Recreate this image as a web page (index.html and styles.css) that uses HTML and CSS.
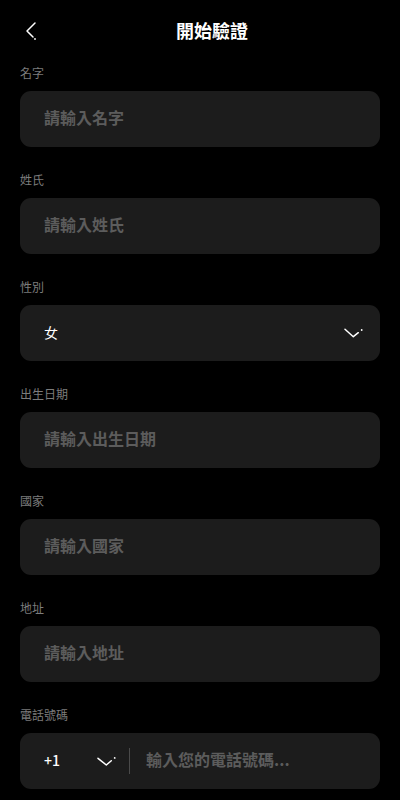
FILE: index.html
```html
<!DOCTYPE html>
<html lang="zh-Hant">
<head>
<meta charset="utf-8">
<meta name="viewport" content="width=device-width, initial-scale=1">
<title>開始驗證</title>
<link rel="stylesheet" href="styles.css">
</head>
<body>
<div class="page">
  <header class="header">
    <button class="back" aria-label="返回">
      <svg width="24" height="24" viewBox="0 0 24 24" fill="none">
        <path d="M15 5 L7 13 L13 19" stroke="#fff" stroke-width="1.5" stroke-linecap="round" stroke-linejoin="round"/>
        <circle cx="15" cy="21" r="0.9" fill="#fff"/>
      </svg>
    </button>
    <h1 class="title">開始驗證</h1>
  </header>

  <form class="form">
    <div class="group">
      <label class="label">名字</label>
      <input class="field" type="text" placeholder="請輸入名字">
    </div>
    <div class="group">
      <label class="label">姓氏</label>
      <input class="field" type="text" placeholder="請輸入姓氏">
    </div>
    <div class="group">
      <label class="label">性別</label>
      <div class="field select">
        <span class="value">女</span>
        <svg class="chev" width="20" height="12" viewBox="0 0 20 12" fill="none">
          <path d="M1 3.3 L9.3 10.7 L14.3 6.7" stroke="#fff" stroke-width="1.5" stroke-linecap="round" stroke-linejoin="round"/>
          <circle cx="17.7" cy="4" r="0.9" fill="#fff"/>
        </svg>
      </div>
    </div>
    <div class="group">
      <label class="label">出生日期</label>
      <input class="field" type="text" placeholder="請輸入出生日期">
    </div>
    <div class="group">
      <label class="label">國家</label>
      <input class="field" type="text" placeholder="請輸入國家">
    </div>
    <div class="group">
      <label class="label">地址</label>
      <input class="field" type="text" placeholder="請輸入地址">
    </div>
    <div class="group">
      <label class="label">電話號碼</label>
      <div class="field phone">
        <div class="code">
          <span class="code-text">+1</span>
          <svg class="chev" width="20" height="12" viewBox="0 0 20 12" fill="none">
            <path d="M1 3.3 L9.3 10 L14.3 5.7" stroke="#fff" stroke-width="1.5" stroke-linecap="round" stroke-linejoin="round"/>
            <circle cx="17.7" cy="2.9" r="0.9" fill="#fff"/>
          </svg>
        </div>
        <span class="divider"></span>
        <input class="phone-input" type="tel" placeholder="輸入您的電話號碼...">
      </div>
    </div>
  </form>
</div>
</body>
</html>
```
FILE: styles.css
```css
* {
  box-sizing: border-box;
}

html, body {
  margin: 0;
  padding: 0;
  background: #000;
}

body {
  font-family: "Noto Sans CJK TC", "Noto Sans", "Liberation Sans", sans-serif;
  color: #fff;
}

.page {
  width: 400px;
  min-height: 800px;
  background: #000;
}

.header {
  height: 60px;
  padding: 0 20px;
  display: flex;
  align-items: center;
}

.back {
  width: 24px;
  height: 24px;
  padding: 0;
  margin: 0;
  border: 0;
  background: transparent;
  display: flex;
}

.title {
  flex: 1;
  margin: 0;
  text-align: center;
  font-size: 18px;
  line-height: 24px;
  font-weight: 700;
  color: #fff;
}

.form {
  padding: 5px 20px 0;
  display: flex;
  flex-direction: column;
  gap: 25px;
}

.group {
  display: flex;
  flex-direction: column;
}

.label {
  font-size: 12px;
  line-height: 16px;
  color: #7c7c7c;
  margin-bottom: 10px;
}

.field {
  height: 56px;
  width: 100%;
  border: 0;
  outline: none;
  border-radius: 11px;
  background: #1c1c1c;
  padding: 0 24px 4px;
  font-family: inherit;
  font-size: 16px;
  font-weight: 700;
  color: #fff;
}

.field::placeholder {
  color: #5c5c5c;
  font-weight: 700;
}

.select {
  display: flex;
  align-items: center;
  justify-content: space-between;
  padding: 0 16px 2px 24px;
}

.value {
  font-size: 14px;
  font-weight: 400;
  color: #fff;
}

.chev {
  display: block;
  flex: none;
}

.phone {
  display: flex;
  align-items: center;
  padding: 0 24px;
}

.code {
  width: 73px;
  display: flex;
  align-items: center;
  justify-content: space-between;
  flex: none;
}

.code-text {
  font-size: 14px;
  font-weight: 500;
  color: #fff;
  padding-bottom: 2px;
}

.divider {
  width: 1px;
  height: 26px;
  background: #4a4a4a;
  margin: 0 16px 0 12px;
  flex: none;
}

.phone-input {
  flex: 1;
  min-width: 0;
  height: 100%;
  border: 0;
  outline: none;
  background: transparent;
  padding: 0 0 4px;
  font-family: inherit;
  font-size: 16px;
  font-weight: 700;
  color: #fff;
}

.phone-input::placeholder {
  color: #5c5c5c;
  font-weight: 700;
}
```
